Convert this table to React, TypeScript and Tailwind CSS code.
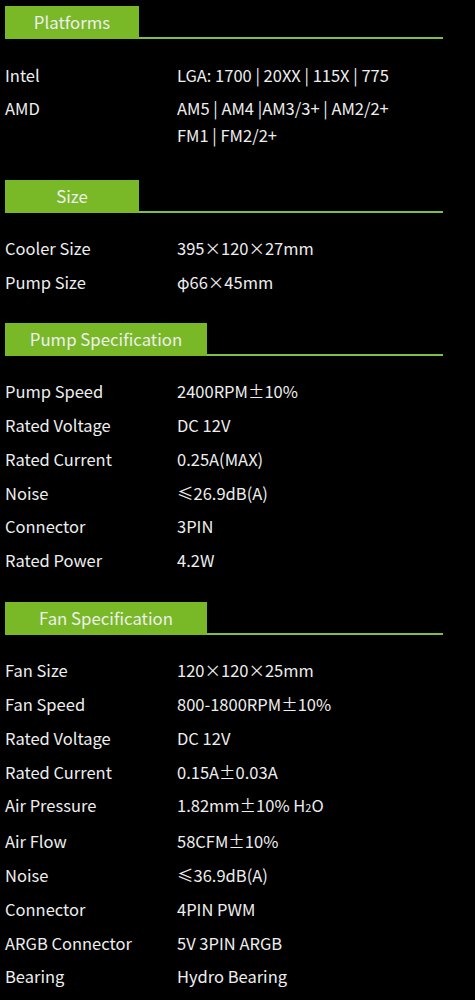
import React from 'react';

type Row = { label: string; value: React.ReactNode };

const sections: { title: string; wide?: boolean; gap: string; rows: Row[] }[] = [
  {
    title: 'Platforms',
    gap: 'mt-[6px]',
    rows: [
      { label: 'Intel', value: 'LGA: 1700 | 20XX | 115X | 775' },
      {
        label: 'AMD',
        value: (
          <>
            AM5 | AM4 |AM3/3+ | AM2/2+
            <br />
            FM1 | FM2/2+
          </>
        ),
      },
    ],
  },
  {
    title: 'Size',
    gap: 'mt-[30.5px]',
    rows: [
      { label: 'Cooler Size', value: '395×120×27mm' },
      { label: 'Pump Size', value: 'φ66×45mm' },
    ],
  },
  {
    title: 'Pump Specification',
    wide: true,
    gap: 'mt-[26.7px]',
    rows: [
      { label: 'Pump Speed', value: '2400RPM±10%' },
      { label: 'Rated Voltage', value: 'DC 12V' },
      { label: 'Rated Current', value: '0.25A(MAX)' },
      { label: 'Noise', value: '≤26.9dB(A)' },
      { label: 'Connector', value: '3PIN' },
      { label: 'Rated Power', value: '4.2W' },
    ],
  },
  {
    title: 'Fan Specification',
    wide: true,
    gap: 'mt-[27.5px]',
    rows: [
      { label: 'Fan Size', value: '120×120×25mm' },
      { label: 'Fan Speed', value: '800-1800RPM±10%' },
      { label: 'Rated Voltage', value: 'DC 12V' },
      { label: 'Rated Current', value: '0.15A±0.03A' },
      {
        label: 'Air Pressure',
        value: (
          <>
            1.82mm±10% H<span className="text-[11px]">2</span>O
          </>
        ),
      },
      { label: 'Air Flow', value: '58CFM±10%' },
      { label: 'Noise', value: '≤36.9dB(A)' },
      { label: 'Connector', value: '4PIN PWM' },
      { label: 'ARGB Connector', value: '5V 3PIN ARGB' },
      { label: 'Bearing', value: 'Hydro Bearing' },
    ],
  },
];

export default function App() {
  return (
    <div
      className="min-h-screen w-[475px] bg-black text-[#eeeeee] overflow-hidden"
      style={{ fontFamily: '"Noto Sans CJK SC", "Noto Sans", sans-serif' }}
    >
      {sections.map((s) => (
        <section key={s.title} className={s.gap}>
          <div className="flex items-end ml-[5px] w-[438px]">
            <div
              className={`${s.wide ? 'w-[202px]' : 'w-[134px]'} shrink-0 h-[33px] bg-[#79b928] flex items-center justify-center text-[16.8px] leading-none`}
            >
              {s.title}
            </div>
            <div className="flex-1 h-[2px] bg-[#80bf45]" />
          </div>
          <div className="mt-[22.5px] flex flex-col gap-[6.8px]">
            {s.rows.map((r, i) => (
              <div key={i} className="flex text-[16.5px] leading-[27px]">
                <div className="w-[177px] pl-[5px] shrink-0">{r.label}</div>
                <div>{r.value}</div>
              </div>
            ))}
          </div>
        </section>
      ))}
    </div>
  );
}
